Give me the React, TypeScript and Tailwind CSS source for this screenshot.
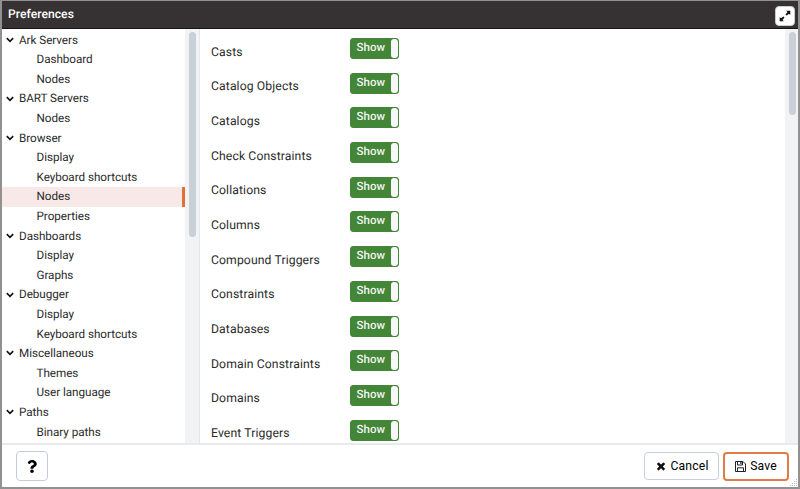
import React from 'react';
import { FaQuestion } from 'react-icons/fa';

type Item = { label: string; group?: boolean; selected?: boolean };

const tree: Item[] = [
  { label: 'Ark Servers', group: true },
  { label: 'Dashboard' },
  { label: 'Nodes' },
  { label: 'BART Servers', group: true },
  { label: 'Nodes' },
  { label: 'Browser', group: true },
  { label: 'Display' },
  { label: 'Keyboard shortcuts' },
  { label: 'Nodes', selected: true },
  { label: 'Properties' },
  { label: 'Dashboards', group: true },
  { label: 'Display' },
  { label: 'Graphs' },
  { label: 'Debugger', group: true },
  { label: 'Display' },
  { label: 'Keyboard shortcuts' },
  { label: 'Miscellaneous', group: true },
  { label: 'Themes' },
  { label: 'User language' },
  { label: 'Paths', group: true },
  { label: 'Binary paths' },
];

const options = [
  'Casts',
  'Catalog Objects',
  'Catalogs',
  'Check Constraints',
  'Collations',
  'Columns',
  'Compound Triggers',
  'Constraints',
  'Databases',
  'Domain Constraints',
  'Domains',
  'Event Triggers',
];

function Chevron() {
  return (
    <svg className="h-[6px] w-[8px]" viewBox="0 0 8 6" fill="none" stroke="#111" strokeWidth="1.6">
      <path d="M0.8 1.1 L4 4.3 L7.2 1.1" />
    </svg>
  );
}

function ExpandIcon() {
  return (
    <svg className="h-3 w-3" viewBox="0 0 12 12" fill="#111">
      <path d="M7.2 0.8H11.3V4.9L10 3.7L7.6 5.6L6.5 4.5L8.5 2.1Z" />
      <path d="M4.8 11.2H0.7V7.1L2 8.3L4.4 6.4L5.5 7.5L3.5 9.9Z" />
    </svg>
  );
}

function CloseIcon() {
  return (
    <svg className="h-3 w-3" viewBox="0 0 1792 1792" fill="#111">
      <path d="M1490 1322q0 40-28 68l-136 136q-28 28-68 28t-68-28l-294-294-294 294q-28 28-68 28t-68-28l-136-136q-28-28-28-68t28-68l294-294-294-294q-28-28-28-68t28-68l136-136q28-28 68-28t68 28l294 294 294-294q28-28 68-28t68 28l136 136q28 28 28 68t-28 68l-294 294 294 294q28 28 28 68z" />
    </svg>
  );
}

function SaveIcon() {
  return (
    <svg className="h-[11px] w-[11px]" viewBox="0 0 11 11" fill="none" stroke="#222" strokeWidth="1">
      <path d="M0.5 0.5H8L10.5 3V10.5H0.5Z" strokeLinejoin="round" />
      <path d="M2.5 0.5V4H7.5V0.5M2.5 10.5V6.8H8.5V10.5" />
      <path d="M5.9 0.8V3" strokeWidth="1.3" />
    </svg>
  );
}

function Toggle() {
  return (
    <div className="flex h-[21px] w-[49.5px] overflow-hidden rounded-[3px] border border-[#438638] bg-[#438638]">
      <span className="w-[40.5px] text-center text-[11.5px] leading-[17px] font-medium tracking-[0px] text-white/95">
        Show
      </span>
      <span className="flex-1 rounded-[3px] bg-[#f7f8f8]" />
    </div>
  );
}

export default function App() {
  return (
    <div className="flex h-[489px] w-[800px] flex-col overflow-hidden border-t border-r-2 border-b-2 border-l-2 border-[#919191] bg-white font-[Roboto,sans-serif] text-[#2b2b2b] antialiased [text-rendering:geometricPrecision]">
      <header className="flex h-7 shrink-0 items-center justify-between border-b border-[#171415] bg-[#363132] pr-[3px] pl-[6px]">
        <h1 className="text-[12.1px] font-medium tracking-[0.05px] text-white">Preferences</h1>
        <button className="mt-[3px] flex h-5 w-5 items-center justify-center rounded-[4px] border border-[#ccc] bg-white">
          <ExpandIcon />
        </button>
      </header>

      <main className="flex h-[414px] shrink-0">
        <nav className="h-full w-[183px] overflow-hidden pt-[1.2px]">
          {tree.map((item, i) => (
            <div
              key={i}
              className={
                'flex h-[19.6px] items-center text-[11.7px] tracking-[-0.04px] whitespace-nowrap ' +
                (item.selected ? 'border-r-[3px] border-[#dd7138] bg-[#f8e9e8] ' : '') +
                (item.group ? 'gap-[5px] pl-1' : 'pl-[34.5px]')
              }
            >
              {item.group && <Chevron />}
              <span className="pt-px">{item.label}</span>
            </div>
          ))}
        </nav>
        <div className="w-[15px] border-r border-[#e4e6ed] bg-[#f2f3f4] pt-[3px] pl-[4px]">
          <div className="h-[205px] w-[7px] rounded-full bg-[#c9d0d7]" />
        </div>
        <section className="h-full flex-1 overflow-hidden pt-[9px] pl-[11px]">
          {options.map((label) => (
            <div key={label} className="flex h-[34.7px] items-start">
              <span className="w-[138.5px] pt-[4.6px] text-[12.2px] leading-[18px] tracking-[0.11px] whitespace-nowrap">
                {label}
              </span>
              <Toggle />
            </div>
          ))}
        </section>
        <div className="w-[13px] bg-[#f2f3f4] pt-[3px] pl-[4px]">
          <div className="h-[83px] w-[7px] rounded-full bg-[#c9d0d7]" />
        </div>
      </main>

      <footer className="relative flex flex-1 items-center justify-between border-t-2 border-[#e9eaf0] pr-[9px] pl-[14px] text-[12.2px] tracking-[0.15px] text-black">
        <button className="flex h-[30px] w-8 items-center justify-center rounded-[4px] border border-[#c6cbdc]">
          <FaQuestion className="h-[13px] w-[10px]" />
        </button>
        <div className="flex items-center gap-1">
          <button className="flex h-[28px] w-[75px] items-center justify-center gap-1 rounded-[4px] border border-[#c9cddd]">
            <CloseIcon />
            Cancel
          </button>
          <button className="flex h-[29px] w-[66px] items-center justify-center gap-1 rounded-[4px] border-2 border-[#e07c45]">
            <SaveIcon />
            Save
          </button>
        </div>
        <svg className="absolute right-0 bottom-0 h-2 w-2" viewBox="0 0 8 8" fill="#bbb">
          <path d="M6 0h1v1H6zM4 2h1v1H4zM6 2h1v1H6zM2 4h1v1H2zM4 4h1v1H4zM6 4h1v1H6zM0 6h1v1H0zM2 6h1v1H2zM4 6h1v1H4zM6 6h1v1H6z" />
        </svg>
      </footer>
    </div>
  );
}
